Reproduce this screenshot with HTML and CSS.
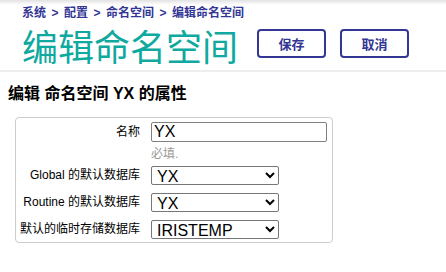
FILE: index.html
```html
<!DOCTYPE html>
<html lang="zh-CN">
<head>
<meta charset="utf-8">
<title>编辑命名空间</title>
<link rel="stylesheet" href="styles.css">
</head>
<body>
<div class="topshade"></div>
<header class="header">
  <nav class="crumbs">
    <a href="#">系统</a><span class="sep">&gt;</span><a href="#">配置</a><span class="sep">&gt;</span><a href="#">命名空间</a><span class="sep">&gt;</span><a href="#">编辑命名空间</a>
  </nav>
  <div class="title-row">
    <h1 class="title">编辑命名空间</h1>
    <div class="actions">
      <button class="btn" type="button">保存</button>
      <button class="btn" type="button">取消</button>
    </div>
  </div>
</header>
<main class="main">
  <h2 class="heading">编辑 命名空间 YX 的属性</h2>
  <div class="form">
    <div class="row">
      <label class="label" for="name">名称</label>
      <div class="field">
        <input id="name" class="text" type="text" value="YX">
        <div class="hint">必填.</div>
      </div>
    </div>
    <div class="row">
      <label class="label" for="g">Global 的默认数据库</label>
      <select id="g" class="sel"><option>YX</option></select>
    </div>
    <div class="row">
      <label class="label" for="r">Routine 的默认数据库</label>
      <select id="r" class="sel"><option>YX</option></select>
    </div>
    <div class="row">
      <label class="label" for="t">默认的临时存储数据库</label>
      <select id="t" class="sel"><option>IRISTEMP</option></select>
    </div>
  </div>
</main>
</body>
</html>
```
FILE: styles.css
```css
html, body {
  margin: 0;
  padding: 0;
  background: #fff;
  font-family: "Liberation Sans", "Noto Sans CJK SC", sans-serif;
}

.topshade {
  height: 5px;
  background: linear-gradient(to bottom, #e2e2e2, #ffffff);
}

.header {
  padding: 1px 0 0 22px;
  height: 64px;
  border-bottom: 2px solid #eeeeee;
}

.crumbs {
  font-size: 12px;
  line-height: 14px;
  font-weight: bold;
  color: #333695;
}

.crumbs a {
  color: #333695;
  text-decoration: none;
}

.sep {
  padding: 0 5.5px;
}

.title-row {
  display: flex;
  align-items: center;
  margin-top: 5px;
  height: 40px;
}

.title {
  margin: 0;
  font-size: 36px;
  line-height: 40px;
  font-weight: normal;
  color: #0fa9a0;
  font-family: "Noto Sans CJK SC", "Liberation Sans", sans-serif;
}

.actions {
  display: flex;
  gap: 14px;
  margin-left: 19px;
  margin-top: -3px;
}

.btn {
  width: 69px;
  height: 29px;
  box-sizing: border-box;
  border: 2px solid #333695;
  border-radius: 4px;
  background: #fff;
  color: #333695;
  font-family: "Liberation Sans", "Noto Sans CJK SC", sans-serif;
  font-size: 13px;
  font-weight: bold;
  padding: 0;
}

.main {
  padding: 0 0 0 8px;
}

.heading {
  margin: 12px 0 0 0;
  font-size: 16px;
  line-height: 20px;
  font-weight: bold;
  color: #000;
}

.form {
  margin: 13px 0 0 7px;
  width: 316px;
  border: 1px solid #cccccc;
  border-radius: 4px;
  padding: 4px 0 3px 0;
  display: flex;
  flex-direction: column;
  gap: 8px;
}

.row {
  display: grid;
  grid-template-columns: 124px auto;
  column-gap: 11px;
  align-items: start;
}

.label {
  text-align: right;
  font-size: 12px;
  line-height: 19px;
  color: #000;
}

.row:first-child .label {
  line-height: 20px;
}

.field {
  display: flex;
  flex-direction: column;
}

.text {
  width: 176px;
  height: 20px;
  box-sizing: border-box;
  margin: 0;
  padding: 0 2px;
  border: 1px solid #808080;
  border-radius: 2px;
  font-family: "Liberation Sans", sans-serif;
  font-size: 16px;
  color: #000;
}

.hint {
  margin-top: 5px;
  margin-bottom: -3px;
  font-size: 12px;
  line-height: 14px;
  color: #999;
}

.sel {
  width: 128px;
  height: 19px;
  box-sizing: border-box;
  margin: 0;
  padding: 0 0 0 1px;
  border: 1px solid #767676;
  border-radius: 2px;
  background: #fff;
  font-family: "Liberation Sans", sans-serif;
  font-size: 16px;
  font-weight: normal;
  color: #000;
}
```
